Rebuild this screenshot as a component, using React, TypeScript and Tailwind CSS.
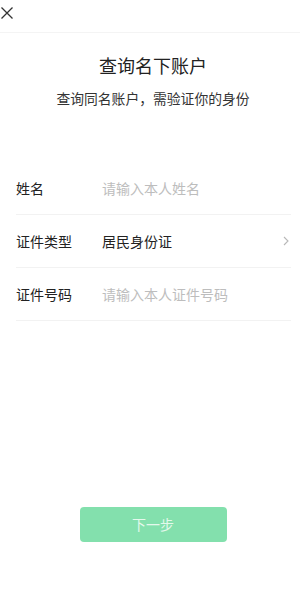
export default function App() {
  const font = { fontFamily: '"Noto Sans CJK SC", "Noto Sans", sans-serif' };
  return (
    <div className="w-[300px] h-[609px] bg-white flex flex-col" style={font}>
      <header className="h-[33px] border-b border-[#f4f4f4] flex items-start">
        <button className="w-[14px] h-[14px] mt-[6px] text-[#333]">
          <svg width="14" height="14" viewBox="0 0 14 14" fill="none" stroke="currentColor" strokeWidth="1.3">
            <path d="M1.5 1.5 L12.5 12.5 M12.5 1.5 L1.5 12.5" />
          </svg>
        </button>
      </header>
      <div className="flex flex-col items-center pl-[6px]">
        <h1 className="mt-[19px] text-[18px] leading-[26px] text-[#222]">查询名下账户</h1>
        <p className="mt-[10px] text-[13.8px] leading-[20px] text-[#333]">查询同名账户，需验证你的身份</p>
      </div>
      <div className="mt-[54px] ml-4 mr-[9px]">
        <div className="h-[53px] flex items-center border-b border-[#f2f2f2]">
          <span className="w-[86px] text-[14px] text-[#222]">姓名</span>
          <span className="text-[14px] text-[#bdbdbd]">请输入本人姓名</span>
        </div>
        <div className="h-[53px] flex items-center border-b border-[#f2f2f2]">
          <span className="w-[86px] text-[14px] text-[#222]">证件类型</span>
          <span className="flex-1 text-[14px] text-[#222]">居民身份证</span>
          <svg width="6" height="10" viewBox="0 0 6 10" fill="none" stroke="#b8b8b8" strokeWidth="1.1" className="mr-[2px]">
            <path d="M1 1 L5 5 L1 9" />
          </svg>
        </div>
        <div className="h-[53px] flex items-center border-b border-[#f2f2f2]">
          <span className="w-[86px] text-[14px] text-[#222]">证件号码</span>
          <span className="text-[14px] text-[#bdbdbd]">请输入本人证件号码</span>
        </div>
      </div>
      <div className="flex-1" />
      <div className="flex justify-center pl-[6px] mb-[67px]">
        <button className="w-[147px] h-[35px] rounded-[4px] bg-[#83e0ad] text-[14px] text-[#e4f8ec]">下一步</button>
      </div>
    </div>
  );
}
